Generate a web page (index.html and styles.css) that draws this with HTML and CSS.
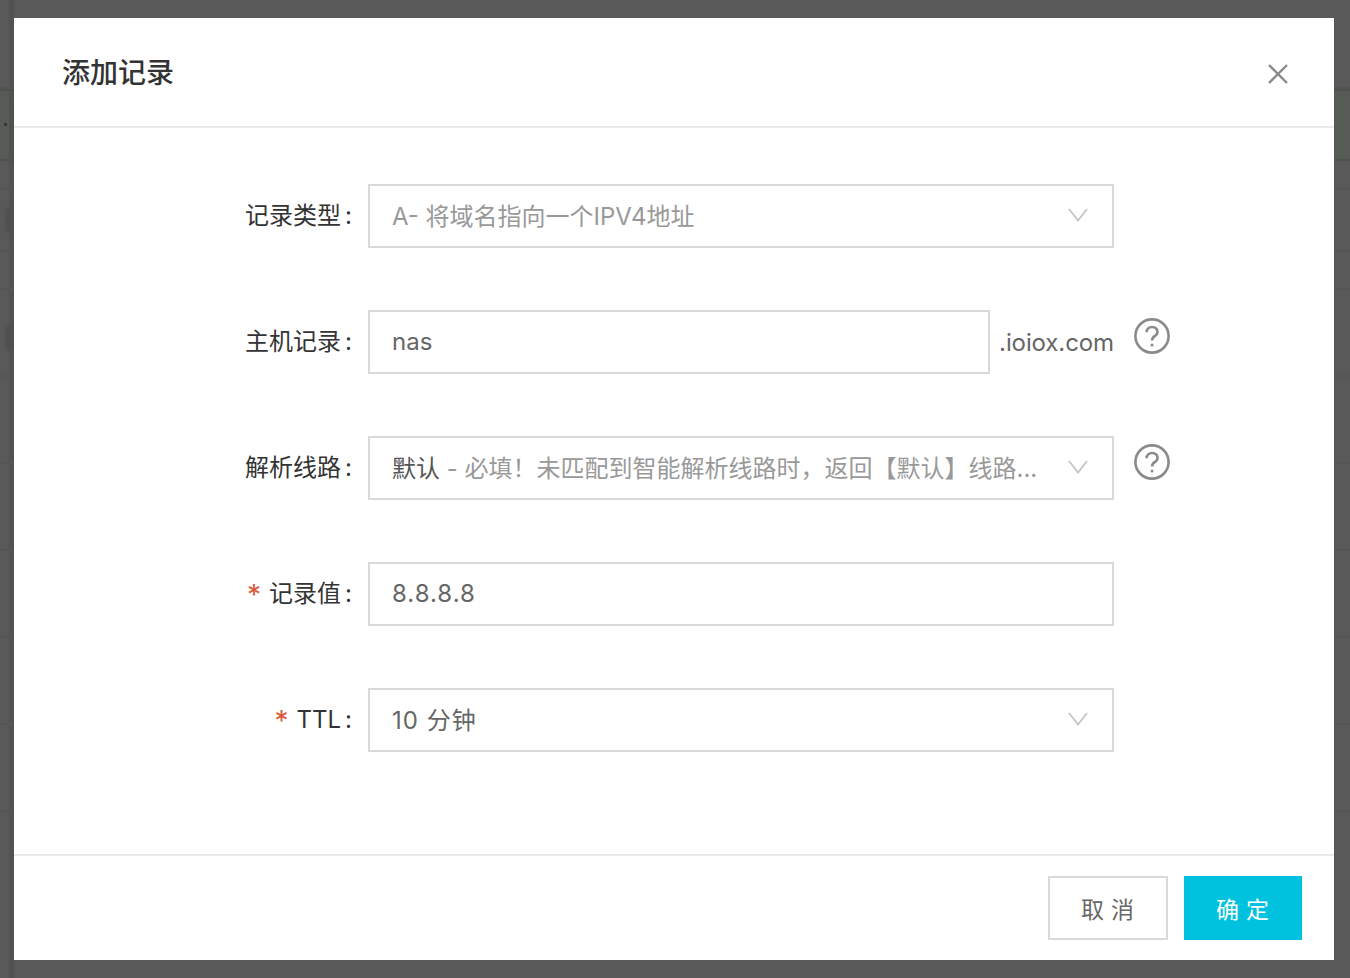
FILE: index.html
```html
<!DOCTYPE html>
<html lang="zh-CN">
<head>
<meta charset="utf-8">
<title>添加记录</title>
<link rel="stylesheet" href="styles.css">
</head>
<body>
<div class="backdrop">
  <div class="bg-row bg-r1"></div>
  <div class="bg-row bg-green"><span class="bg-text">.l</span></div>
  <div class="bg-row bg-r2"></div>
  <div class="bg-row bg-r3"><i class="ghost"></i></div>
  <div class="bg-row bg-r5"></div>
  <div class="bg-row bg-r4"><i class="ghost"></i></div>
  <div class="bg-row bg-r4"></div>
  <div class="bg-row bg-r4"></div>
  <div class="bg-row bg-r4"></div>
  <div class="bg-row bg-r4"></div>
  <div class="bg-row bg-r4"></div>
</div>
<div class="modal">
  <header class="modal-head">
    <h1 class="modal-title">添加记录</h1>
    <svg class="close" viewBox="0 0 20 20" aria-label="关闭"><path d="M1 1 19 19M19 1 1 19"/></svg>
  </header>
  <form class="modal-body">
    <div class="row">
      <label class="label">记录类型<span class="colon">:</span></label>
      <div class="field select muted"><span class="value">A- 将域名指向一个IPV4地址</span><svg class="chev" viewBox="0 0 20 14"><path d="M1 1 10 12.5 19 1"/></svg></div>
    </div>
    <div class="row">
      <label class="label">主机记录<span class="colon">:</span></label>
      <div class="host-wrap">
        <div class="field host"><span class="value">nas</span></div>
        <span class="suffix">.ioiox.com</span>
      </div>
      <svg class="help" viewBox="0 0 36 36"><circle cx="18" cy="18" r="16.6"/><path d="M12.6 14.2c0-3.2 2.4-5.2 5.5-5.2s5.4 1.9 5.4 4.8c0 2.2-1.2 3.3-2.8 4.4-1.7 1.1-2.6 2-2.6 4.3"/><circle class="dot" cx="18" cy="27" r="1.5"/></svg>
    </div>
    <div class="row">
      <label class="label">解析线路<span class="colon">:</span></label>
      <div class="field select muted"><span class="value"><span class="strong">默认</span> - 必填！未匹配到智能解析线路时，返回【默认】线路...</span><svg class="chev" viewBox="0 0 20 14"><path d="M1 1 10 12.5 19 1"/></svg></div>
      <svg class="help" viewBox="0 0 36 36"><circle cx="18" cy="18" r="16.6"/><path d="M12.6 14.2c0-3.2 2.4-5.2 5.5-5.2s5.4 1.9 5.4 4.8c0 2.2-1.2 3.3-2.8 4.4-1.7 1.1-2.6 2-2.6 4.3"/><circle class="dot" cx="18" cy="27" r="1.5"/></svg>
    </div>
    <div class="row">
      <label class="label"><span class="star">*</span>记录值<span class="colon">:</span></label>
      <div class="field"><span class="value num">8.8.8.8</span></div>
    </div>
    <div class="row">
      <label class="label"><span class="star">*</span>TTL<span class="colon">:</span></label>
      <div class="field select"><span class="value num">10 分钟</span><svg class="chev" viewBox="0 0 20 14"><path d="M1 1 10 12.5 19 1"/></svg></div>
    </div>
  </form>
  <footer class="modal-foot">
    <button class="btn btn-cancel" type="button">取 消</button>
    <button class="btn btn-ok" type="button">确 定</button>
  </footer>
</div>
</body>
</html>
```
FILE: styles.css
```css
* { box-sizing: border-box; }
html, body { margin: 0; height: 100%; }
body {
  position: relative;
  width: 1350px;
  height: 978px;
  overflow: hidden;
  background: linear-gradient(90deg, #595959 9px, #525252 9px, #525252 14px, #595959 14px);
  font-family: "Inter", "Noto Sans CJK SC", sans-serif;
  color: #333;
}
.backdrop { display: flex; flex-direction: column; padding-top: 56px; height: 978px; }
.bg-row { border-bottom: 2px solid #545454; flex: none; }
.bg-r1 { height: 33px; }
.bg-green {
  height: 72px;
  background: linear-gradient(90deg, #575b55 9px, #4f534d 9px, #4f534d 14px, #575b55 14px);
  border-top: 2px solid #4d514b;
  border-bottom-color: #4d514b;
  overflow: hidden;
}
.bg-text { display: block; font-size: 24px; color: #333; line-height: 54px; padding-left: 2px; letter-spacing: 3px; }
.bg-r2 { height: 29px; border-bottom-color: #565656; }
.bg-r3 { height: 62px; }
.bg-r5 { height: 38px; border-bottom-color: #565656; }
.bg-r4 { height: 87px; border-bottom-color: #565656; }
.ghost {
  display: block;
  width: 8px;
  height: 24px;
  margin: 18px 0 0 5px;
  background: #505050;
  filter: blur(1.5px);
}
.bg-r4 .ghost { margin-top: 36px; }

.modal {
  position: absolute;
  left: 14px;
  top: 18px;
  width: 1320px;
  height: 942px;
  background: #fff;
  display: flex;
  flex-direction: column;
}
.modal-head {
  height: 110px;
  flex: none;
  border-bottom: 2px solid #e9e9e9;
  display: flex;
  align-items: center;
  justify-content: space-between;
  padding: 0 46px 0 48px;
}
.modal-title {
  margin: 0 0 2px;
  font-size: 28px;
  line-height: 40px;
  font-weight: 500;
  color: #333;
  font-family: "Noto Sans CJK SC", sans-serif;
}
.close { width: 20px; height: 20px; margin-top: 4px; fill: none; stroke: #8a8a8a; stroke-width: 2.4; }
.modal-body {
  flex: 1;
  padding-top: 56px;
  display: flex;
  flex-direction: column;
  gap: 62px;
}
.row { display: flex; align-items: center; height: 64px; position: relative; }
.label {
  width: 354px;
  padding-right: 16px;
  text-align: right;
  font-size: 24px;
  line-height: 32px;
  color: #333;
  white-space: nowrap;
}
.colon { margin-left: 4px; }
.star { color: #d9593c; margin-right: 8px; font-size: 28px; line-height: 20px; vertical-align: -3px; }
.field {
  width: 746px;
  height: 64px;
  border: 2px solid #d9d9d9;
  display: flex;
  align-items: center;
  justify-content: space-between;
  padding: 0 24px 2px 22px;
  font-size: 24px;
  color: #666;
  background: #fff;
}
.select { padding-bottom: 4px; }
.muted { color: #999; }
.strong { color: #555; }
.value { white-space: nowrap; }
.num { letter-spacing: 1px; }
.chev { width: 20px; height: 14px; flex: none; margin-top: 2px; fill: none; stroke: #c4c4c4; stroke-width: 1.8; }
.host-wrap { width: 746px; display: flex; align-items: center; justify-content: space-between; }
.host { width: 622px; }
.suffix { font-size: 24px; color: #666; white-space: nowrap; letter-spacing: -0.1px; }
.help {
  position: absolute;
  left: 1120px;
  top: 8px;
  width: 36px;
  height: 36px;
  fill: none;
  stroke: #8a8a8a;
  stroke-width: 2.6;
}
.help .dot { fill: #8a8a8a; stroke: none; }
.modal-foot {
  height: 106px;
  flex: none;
  border-top: 2px solid #e9e9e9;
  display: flex;
  justify-content: flex-end;
  gap: 16px;
  padding: 20px 32px 0 0;
}
.btn {
  height: 64px;
  font-family: "Noto Sans CJK SC", sans-serif;
  font-size: 23px;
  letter-spacing: 1px;
  cursor: pointer;
  padding: 0;
}
.btn-cancel { width: 120px; background: #fff; border: 2px solid #d9d9d9; color: #666; }
.btn-ok { width: 118px; background: #00c1de; border: 0; color: #fff; }
```
